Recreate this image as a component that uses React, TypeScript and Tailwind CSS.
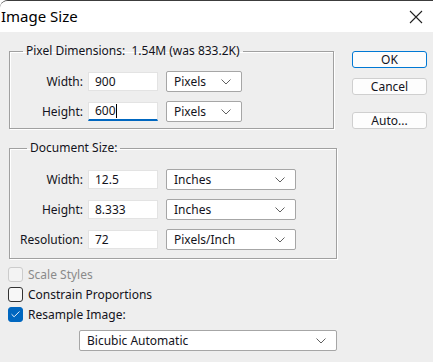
import { Check } from 'lucide-react'

const font = { fontFamily: '"Noto Sans", "Open Sans", sans-serif' }

function Chevron() {
  return (
    <svg width="10" height="6" viewBox="0 0 10 6" className="shrink-0">
      <path d="M0.5 0.5 L5 5 L9.5 0.5" fill="none" stroke="#606060" strokeWidth="1" />
    </svg>
  )
}

function Select({ value, width }: { value: string; width: string }) {
  return (
    <div
      className={`${width} h-[21px] flex items-center justify-between pl-[7px] pr-[10px] bg-white border border-[#a6a6a6] rounded-[2px]`}
    >
      <span>{value}</span>
      <Chevron />
    </div>
  )
}

function Field({ value, focused }: { value: string; focused?: boolean }) {
  return (
    <div
      className={`w-[70px] h-[19px] flex items-center pl-[6px] bg-white border border-[#e3e3e3] ${
        focused ? 'border-b-2 border-b-[#0067c0]' : ''
      }`}
    >
      <span>{value}</span>
      {focused && <span className="w-px h-[14px] bg-black" />}
    </div>
  )
}

function Row({
  label,
  value,
  unit,
  selectWidth,
  focused,
}: {
  label: string
  value: string
  unit: string
  selectWidth: string
  focused?: boolean
}) {
  return (
    <div className="flex items-center h-[21px]">
      <span className="w-[73px] text-right">{label}</span>
      <div className="ml-[5px]">
        <Field value={value} focused={focused} />
      </div>
      <div className="ml-[8px]">
        <Select value={unit} width={selectWidth} />
      </div>
    </div>
  )
}

function Button({ label, primary }: { label: string; primary?: boolean }) {
  return (
    <button
      className={`w-[75px] h-[17px] flex items-center justify-center leading-none rounded-[3px] bg-[#fdfdfd] border ${
        primary ? 'border-[#0078d4]' : 'border-[#cfcfcf]'
      }`}
    >
      {label}
    </button>
  )
}

function CheckRow({ label, checked, disabled }: { label: string; checked?: boolean; disabled?: boolean }) {
  return (
    <div className="flex items-center h-[15px]">
      <div
        className={`w-[15px] h-[15px] rounded-[3px] flex items-center justify-center ${
          checked
            ? 'bg-[#0067c0] border border-[#0067c0]'
            : disabled
              ? 'border border-[#cccccc] bg-[#f3f3f3]'
              : 'border border-[#333333] bg-[#f7f7f7]'
        }`}
      >
        {checked && <Check size={11} color="white" strokeWidth={2} />}
      </div>
      <span className={`ml-[5px] ${disabled ? 'text-[#8a8a8a]' : ''}`}>{label}</span>
    </div>
  )
}

export default function App() {
  return (
    <div
      className="w-[433px] h-[362px] bg-[#eeeeee] text-[12px] leading-[16px] text-[#131320] border-t border-[#3c3c3c] rounded-tl-[8px] overflow-hidden"
      style={font}
    >
      <div className="h-[31px] bg-white flex items-center justify-between pl-[1px] pr-[10px]">
        <span className="text-[15px] text-black -mt-[1px]">Image Size</span>
        <svg width="14" height="14" viewBox="0 0 14 14">
          <path d="M1 1 L13 13 M13 1 L1 13" stroke="#222" strokeWidth="1.1" />
        </svg>
      </div>

      <div className="flex pl-[8px]">
        <div className="w-[329px] flex flex-col">
          <fieldset className="ml-[1px] mt-[11px] w-[325px] border border-[#a0a0a0] shadow-[inset_1px_1px_0_#ffffff,1px_1px_0_#ffffff] pb-[6px]">
            <legend className="ml-[13px] px-[3px]">Pixel Dimensions:&nbsp; 1.54M (was 833.2K)</legend>
            <div className="mt-[12px] flex flex-col gap-[9px]">
              <Row label="Width:" value="900" unit="Pixels" selectWidth="w-[76px]" />
              <Row label="Height:" value="600" unit="Pixels" selectWidth="w-[76px]" focused />
            </div>
          </fieldset>

          <fieldset className="ml-[1px] mt-[11px] w-[328px] border border-[#a0a0a0] shadow-[inset_1px_1px_0_#ffffff,1px_1px_0_#ffffff] pb-[8px]">
            <legend className="ml-[17px] px-[3px]">Document Size:</legend>
            <div className="mt-[13px] flex flex-col gap-[9px]">
              <Row label="Width:" value="12.5" unit="Inches" selectWidth="w-[130px]" />
              <Row label="Height:" value="8.333" unit="Inches" selectWidth="w-[130px]" />
              <Row label="Resolution:" value="72" unit="Pixels/Inch" selectWidth="w-[130px]" />
            </div>
          </fieldset>

          <div className="mt-[8px] flex flex-col gap-[5px]">
            <CheckRow label="Scale Styles" disabled />
            <CheckRow label="Constrain Proportions" />
            <CheckRow label="Resample Image:" checked />
          </div>

          <div className="mt-[8px] ml-[71px]">
            <Select value="Bicubic Automatic" width="w-[258px]" />
          </div>
        </div>

        <div className="ml-[15px] mt-[19px] flex flex-col">
          <Button label="OK" primary />
          <div className="mt-[10px]">
            <Button label="Cancel" />
          </div>
          <div className="mt-[17px]">
            <Button label="Auto..." />
          </div>
        </div>
      </div>
    </div>
  )
}
